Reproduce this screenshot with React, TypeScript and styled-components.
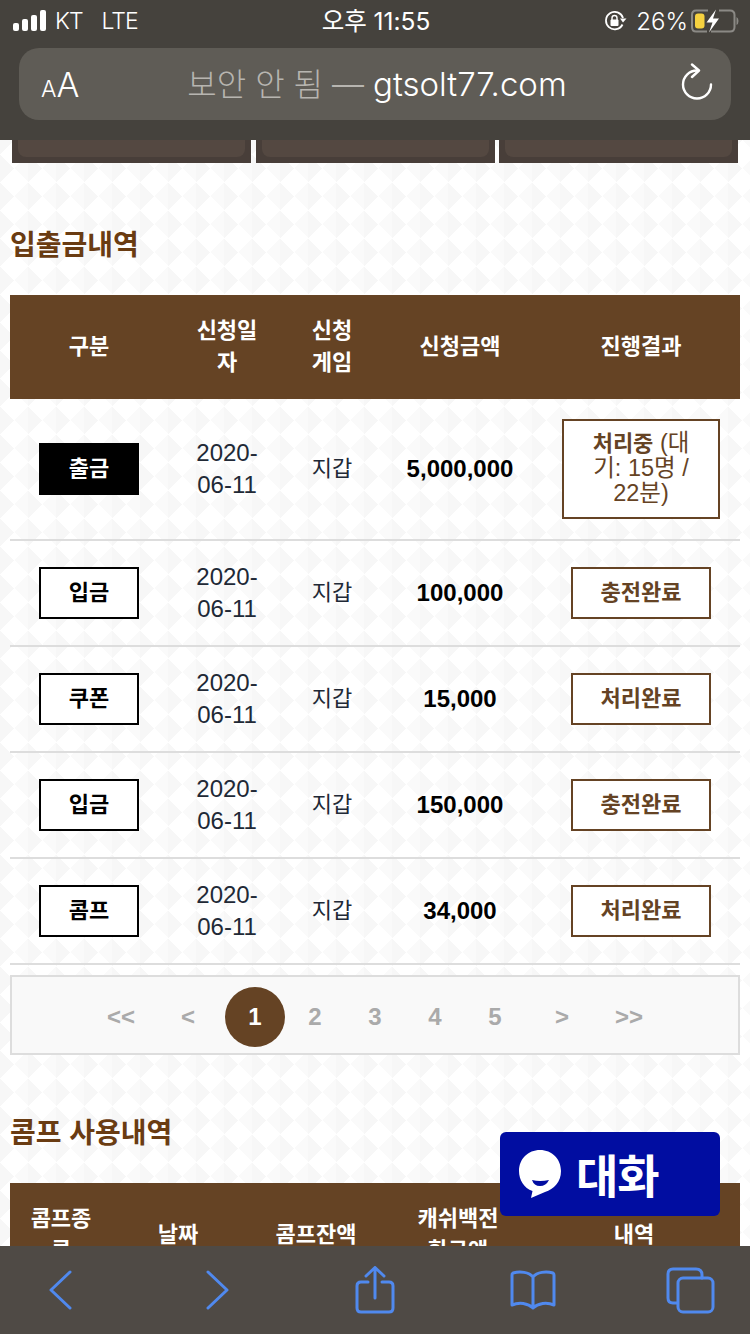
import React from "react";
import styled, { createGlobalStyle } from "styled-components";

const rows = [
  { kind: "출금", solid: true, amount: "5,000,000", result: "" },
  { kind: "입금", solid: false, amount: "100,000", result: "충전완료" },
  { kind: "쿠폰", solid: false, amount: "15,000", result: "처리완료" },
  { kind: "입금", solid: false, amount: "150,000", result: "충전완료" },
  { kind: "콤프", solid: false, amount: "34,000", result: "처리완료" },
];

const App = () => {
  return (
    <Page>
      <GlobalStyle />

      <TopBar>
        <StatusRow>
          <StatusGroup>
            <SignalIcon />
            <Carrier>KT</Carrier>
            <Carrier>LTE</Carrier>
          </StatusGroup>
          <Clock>오후 11:55</Clock>
          <StatusGroup $right>
            <LockIcon />
            <Percent>26%</Percent>
            <BatteryIcon />
          </StatusGroup>
        </StatusRow>
        <UrlBar>
          <FontToggle>
            <SmallA>A</SmallA>
            <BigA>A</BigA>
          </FontToggle>
          <UrlText>
            <UrlWarn>보안 안 됨 — </UrlWarn>gtsolt77.com
          </UrlText>
          <ReloadCell>
            <ReloadIcon />
          </ReloadCell>
        </UrlBar>
      </TopBar>

      <Main>
        <CardStrip>
          <StripCard><StripInner /></StripCard>
          <StripCard><StripInner /></StripCard>
          <StripCard><StripInner /></StripCard>
        </CardStrip>

        <Heading>입출금내역</Heading>
        <Table>
          <thead>
            <tr>
              <Th $w={158}>구분</Th>
              <Th $w={118}>신청일자</Th>
              <Th $w={92}>신청게임</Th>
              <Th $w={164}>신청금액</Th>
              <Th $w={198}>진행결과</Th>
            </tr>
          </thead>
          <tbody>
            {rows.map((row, i) => (
              <tr key={i}>
                <Td>
                  <KindBadge $solid={row.solid}>{row.kind}</KindBadge>
                </Td>
                <DateTd>2020-06-11</DateTd>
                <Td>지갑</Td>
                <AmountTd>{row.amount}</AmountTd>
                <Td>
                  {row.result ? (
                    <ResultBadge>{row.result}</ResultBadge>
                  ) : (
                    <PendingBadge>
                      <PendingLabel>처리중</PendingLabel> (대기: 15명 / 22분)
                    </PendingBadge>
                  )}
                </Td>
              </tr>
            ))}
          </tbody>
        </Table>

        <Pager>
          <ArrowGroup>
            <PageItem>&lt;&lt;</PageItem>
            <PageItem>&lt;</PageItem>
          </ArrowGroup>
          <PageItem $active>1</PageItem>
          <PageItem>2</PageItem>
          <PageItem>3</PageItem>
          <PageItem>4</PageItem>
          <PageItem>5</PageItem>
          <ArrowGroup>
            <PageItem>&gt;</PageItem>
            <PageItem>&gt;&gt;</PageItem>
          </ArrowGroup>
        </Pager>

        <SecondHeading>콤프 사용내역</SecondHeading>
        <Table>
          <thead>
            <tr>
              <Th $w={102}>콤프종류</Th>
              <Th $w={132}>날짜</Th>
              <Th $w={144}>콤프잔액</Th>
              <Th $w={140}>캐쉬백전환금액</Th>
              <Th $w={212}>내역</Th>
            </tr>
          </thead>
        </Table>
      </Main>

      <ChatButton>
        <BubbleIcon />
        <ChatLabel>대화</ChatLabel>
      </ChatButton>

      <BottomBar>
        <ToolIcon width="24" height="40" viewBox="0 0 24 40">
          <path d="M22 2 L3 20 L22 38" />
        </ToolIcon>
        <ToolIcon width="24" height="40" viewBox="0 0 24 40">
          <path d="M2 2 L21 20 L2 38" />
        </ToolIcon>
        <ToolIcon width="40" height="48" viewBox="0 0 40 48">
          <path d="M13 16 H6 Q2 16 2 20 V42 Q2 46 6 46 H34 Q38 46 38 42 V20 Q38 16 34 16 H27" />
          <path d="M20 32 V2 M11 10 L20 1.5 L29 10" />
        </ToolIcon>
        <ToolIcon width="46" height="40" viewBox="0 0 46 40">
          <path d="M23 7 C19 2 10 1 3 3 Q2 3.500 2 5 V35 C9 32 18 33 23 38 C28 33 37 32 44 35 V5 Q44 3.500 43 3 C36 1 27 2 23 7 Z M23 7 V38" />
        </ToolIcon>
        <ToolIcon width="49" height="47" viewBox="0 0 49 47">
          <path d="M11 36 H7 Q2 36 2 31 V7 Q2 2 7 2 H30 Q36 2 36 8 V11" />
          <rect x="12" y="11" width="35" height="34" rx="5" />
        </ToolIcon>
      </BottomBar>
    </Page>
  );
};

const SignalIcon = () => (
  <svg width="34" height="22" viewBox="0 0 34 22" fill="#fff">
    <rect x="0" y="13" width="6" height="8" rx="2" />
    <rect x="9" y="9" width="6" height="12" rx="2" />
    <rect x="18" y="5" width="6" height="16" rx="2" />
    <rect x="27" y="0" width="6" height="21" rx="2" />
  </svg>
);

const LockIcon = () => (
  <svg width="22" height="20" viewBox="0 0 22 20" fill="none">
    <path d="M17.500 13.500 A8.700 8.700 0 1 1 18 7" stroke="#fff" strokeWidth="1.800" />
    <path d="M15 7.500 H21.500 L18 11.500 Z" fill="#fff" />
    <rect x="5.500" y="8.500" width="8" height="6.500" rx="1" fill="#fff" />
    <path d="M7 9 V7 A2.500 2.500 0 0 1 12 7 V9" stroke="#fff" strokeWidth="1.400" />
  </svg>
);

const BatteryIcon = () => (
  <svg width="48" height="24" viewBox="0 0 48 24" fill="none">
    <path d="M17 1.500 H5 Q1 1.500 1 6 V18 Q1 22.500 5 22.500 H16" stroke="#8b8985" strokeWidth="2" />
    <path d="M28 1.500 H39 Q43.500 1.500 43.500 6 V18 Q43.500 22.500 39 22.500 H20" stroke="#8b8985" strokeWidth="2" />
    <rect x="4" y="4.500" width="9.500" height="15" rx="3" fill="#f6d13f" />
    <path d="M25 0.500 L15.500 13.500 H21.500 L18 23.500 L28 9.500 H22 Z" fill="#fff" />
    <path d="M45.500 8 Q47.500 9 47.500 12 Q47.500 15 45.500 16 Z" fill="#8b8985" />
  </svg>
);

const ReloadIcon = () => (
  <svg width="32" height="38" viewBox="0 0 32 38" fill="none" stroke="#fff" strokeWidth="2.400" strokeLinecap="round">
    <path d="M30 21.500 A14 14 0 1 1 16 7.500" />
    <path d="M11 1.500 L18 7.500 L11 14" strokeLinejoin="round" />
  </svg>
);

const BubbleIcon = () => (
  <svg width="44" height="50" viewBox="0 0 44 50">
    <path d="M22 1 C34 1 43 10 43 22 C43 33 36 40 27 43 L13 49 L14.500 42 C6 39 1 31 1 22 C1 10 10 1 22 1 Z" fill="#fff" />
    <path d="M14 31 Q22 33 31 31 Q28 37 22 37 Q16 37 14 31 Z" fill="#010da1" />
  </svg>
);

const GlobalStyle = createGlobalStyle`
  html, body {
    margin: 0;
    padding: 0;
    height: 100%;
    overflow: hidden;
  }

  body {
    background-color: #fff;
    background-image:
      linear-gradient(45deg, #f7f7f7 25%, transparent 25%),
      linear-gradient(135deg, #f7f7f7 25%, transparent 25%),
      linear-gradient(225deg, #fafafa 25%, transparent 25%),
      linear-gradient(315deg, #fafafa 25%, transparent 25%);
    background-size: 28px 28px;
    font-family: "Liberation Sans", "Noto Sans CJK KR", sans-serif;
  }
`;

const Page = styled.div`
  width: 750px;
  height: 1334px;
  overflow: hidden;
`;

const TopBar = styled.header`
  position: fixed;
  top: 0;
  left: 0;
  right: 0;
  height: 140px;
  z-index: 5;
  background: #45423d;
  font-family: Inter, "Noto Sans CJK KR", sans-serif;
  color: #fff;
`;

const StatusRow = styled.div`
  display: grid;
  grid-template-columns: 1fr auto 1fr;
  align-items: center;
  height: 42px;
  padding: 0 11px 0 13px;
`;

const StatusGroup = styled.div<{ $right?: boolean }>`
  display: flex;
  align-items: center;
  justify-content: ${(p) => (p.$right ? "flex-end" : "flex-start")};
  gap: ${(p) => (p.$right ? "3px" : "8px")};
`;

const Carrier = styled.span`
  font-size: 23px;
  font-weight: 300;
  margin-right: 11px;
  letter-spacing: -1px;
`;

const Clock = styled.span`
  margin-top: -3px;
  font-size: 24.5px;
  font-weight: 400;
`;

const Percent = styled.span`
  font-size: 24px;
  font-weight: 300;
  margin-left: 6px;
`;

const UrlBar = styled.div`
  display: grid;
  grid-template-columns: 1fr auto 1fr;
  align-items: center;
  height: 72px;
  margin: 6px 19px 0;
  padding: 0 18px 0 22px;
  border-radius: 20px;
  background: #5f5c56;
`;

const FontToggle = styled.div`
  display: flex;
  align-items: baseline;
  font-weight: 300;
`;

const SmallA = styled.span`
  font-size: 23px;
`;

const BigA = styled.span`
  font-size: 34px;
`;

const UrlText = styled.div`
  margin-top: -4px;
  font-size: 33px;
  font-weight: 300;
  white-space: nowrap;
`;

const UrlWarn = styled.span`
  color: #b7b5b0;
  font-size: 32px;
`;

const ReloadCell = styled.div`
  display: flex;
  justify-content: flex-end;
  margin-top: -5px;
`;

const Main = styled.main`
  padding: 100px 10px 0;
`;

const CardStrip = styled.div`
  display: flex;
  gap: 4.5px;
  margin: 0 2px;
`;

const StripCard = styled.div`
  flex: 1;
  height: 63px;
  padding: 0 6px 6px;
  box-sizing: border-box;
  background: #483e39;
`;

const StripInner = styled.div`
  height: 100%;
  border-radius: 0 0 8px 8px;
  background: #544841;
`;

const Heading = styled.h2`
  margin: 61px 0 31px;
  height: 40px;
  line-height: 44px;
  font-size: 28px;
  font-weight: 700;
  color: #6a3c12;
`;

const SecondHeading = styled(Heading)`
  margin-top: 57px;
`;

const Table = styled.table`
  width: 730px;
  table-layout: fixed;
  border-collapse: collapse;
`;

const Th = styled.th<{ $w: number }>`
  width: ${(p) => p.$w}px;
  padding: 20px;
  box-sizing: border-box;
  background: #654324;
  color: #fff;
  font-size: 22px;
  font-weight: 700;
  line-height: 32px;
  text-align: center;
`;

const Td = styled.td`
  padding: 20px;
  border-bottom: 2px solid #ddd;
  color: #212936;
  font-size: 22px;
  line-height: 32px;
  text-align: center;
`;

const DateTd = styled(Td)`
  font-size: 24px;
`;

const AmountTd = styled(Td)`
  color: #000;
  font-size: 24px;
  font-weight: 700;
`;

const KindBadge = styled.div<{ $solid: boolean }>`
  width: 100px;
  height: 52px;
  margin: 0 auto;
  box-sizing: border-box;
  border: 2px solid #000;
  background: ${(p) => (p.$solid ? "#000" : "#fff")};
  color: ${(p) => (p.$solid ? "#fff" : "#000")};
  font-weight: 700;
  line-height: 48px;
`;

const ResultBadge = styled.div`
  width: 140px;
  height: 52px;
  margin: 0 auto;
  box-sizing: border-box;
  border: 2px solid #654324;
  background: #fff;
  color: #654324;
  font-weight: 700;
  line-height: 48px;
`;

const PendingBadge = styled.div`
  width: 158px;
  height: 100px;
  padding: 10px 18px;
  box-sizing: border-box;
  border: 2px solid #654324;
  background: #fff;
  color: #654324;
  font-size: 23.5px;
  line-height: 25px;
`;

const PendingLabel = styled.b`
  font-size: 22px;
`;

const Pager = styled.nav`
  display: flex;
  justify-content: center;
  align-items: center;
  height: 80px;
  margin-top: 10px;
  padding-top: 4px;
  box-sizing: border-box;
  border: 2px solid #ddd;
  background: #f9f9f9;
`;

const ArrowGroup = styled.div`
  display: flex;
  gap: 7px;
  margin: 0 7px;
`;

const PageItem = styled.span<{ $active?: boolean }>`
  width: 60px;
  height: 60px;
  border-radius: 50%;
  background: ${(p) => (p.$active ? "#654324" : "transparent")};
  color: ${(p) => (p.$active ? "#fff" : "#aaa")};
  font-size: 24px;
  font-weight: 700;
  line-height: 60px;
  text-align: center;
`;

const ChatButton = styled.div`
  position: fixed;
  left: 500px;
  top: 1132px;
  z-index: 4;
  display: flex;
  align-items: center;
  gap: 14px;
  width: 220px;
  height: 84px;
  padding: 0 0 0 18px;
  box-sizing: border-box;
  border-radius: 6px;
  background: #010da1;
`;

const ChatLabel = styled.span`
  margin-top: -3px;
  color: #fff;
  font-size: 46px;
  font-weight: 700;
  letter-spacing: -1px;
`;

const BottomBar = styled.footer`
  position: fixed;
  left: 0;
  right: 0;
  bottom: 0;
  z-index: 5;
  display: grid;
  grid-template-columns: repeat(5, 157.5px);
  justify-content: center;
  justify-items: center;
  align-items: center;
  height: 88px;
  background: #4f4a45;
`;

const ToolIcon = styled.svg`
  fill: none;
  stroke: #5089ee;
  stroke-width: 3;
  stroke-linecap: round;
  stroke-linejoin: round;
`;

export default App;
